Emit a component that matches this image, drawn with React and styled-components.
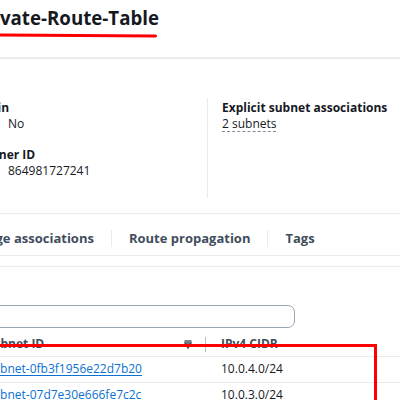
import React from 'react';
import styled, { createGlobalStyle } from 'styled-components';

const GlobalStyle = createGlobalStyle`
	html, body {
		margin: 0;
		padding: 0;
		background: #ffffff;
	}
	body {
		font-family: 'Open Sans', 'Noto Sans', sans-serif;
		color: #16191f;
	}
`;

const Viewport = styled.div`
	position: relative;
	width: 400px;
	height: 400px;
	overflow: hidden;
	background: #ffffff;
`;

const Page = styled.div`
	margin-left: -40px;
	width: 480px;
	padding-top: 6px;
`;

const Title = styled.h1`
	margin: 0 0 27px;
	padding-left: 14px;
	font-size: 18.7px;
	line-height: 24px;
	font-weight: 700;
	color: #16191f;
	white-space: nowrap;
`;

const Rule = styled.div`
	height: 2px;
	background: #e9ebed;
`;

const Details = styled.div`
	display: grid;
	grid-template-columns: 247px 1fr;
	padding-top: 39px;
	margin-bottom: 15px;
`;

const Column = styled.div`
	min-height: 100px;
	box-sizing: border-box;
	padding: 2px 0 0 ${(p) => p.$pad}px;
	border-left: ${(p) => (p.$divided ? '1px solid #e9ebed' : 'none')};
`;

const Field = styled.div`
	& + & {
		margin-top: 15px;
	}
`;

const Label = styled.div`
	font-size: 12px;
	line-height: 16px;
	font-weight: 700;
	color: #16191f;
	white-space: nowrap;
`;

const Value = styled.div`
	font-size: 12px;
	line-height: 16px;
	color: #16191f;
	padding-left: ${(p) => p.$indent || 0}px;
	white-space: nowrap;
`;

const Dotted = styled.span`
	text-decoration: underline dashed #7d8998;
	text-underline-offset: 3px;
	text-decoration-thickness: 1px;
`;

const Tabs = styled.div`
	display: flex;
	align-items: flex-start;
	border-top: 1px solid #e9ebed;
	border-bottom: 1px solid #e9ebed;
	padding: 15px 0 8px 20px;
	margin-bottom: 10px;
`;

const Tab = styled.div`
	font-size: 13px;
	line-height: 18px;
	font-weight: 700;
	color: #414d5c;
	white-space: nowrap;
	padding: 0 17px;
	&:first-child {
		padding-left: 0;
	}
`;

const TabDivider = styled.span`
	display: block;
	width: 1px;
	height: 17px;
	margin-top: 1px;
	background: #e9ebed;
`;

const TablePanel = styled.div`
	border-top: 1px solid #e9ebed;
	padding-top: 38px;
`;

const Search = styled.div`
	height: 21px;
	width: 333px;
	border: 1px solid #9ba7b6;
	border-radius: 7px;
	margin-bottom: 4px;
`;

const Row = styled.div`
	display: grid;
	grid-template-columns: 246px 1fr;
	border-bottom: 1px solid #e9ebed;
	padding: ${(p) => (p.$head ? '4px 0 4px' : '4px 0 5px')};
	font-size: 12px;
	line-height: 16px;
`;

const Cell = styled.div`
	display: flex;
	align-items: center;
	white-space: nowrap;
	padding-left: ${(p) => p.$pad}px;
	color: ${(p) => (p.$head ? '#414d5c' : '#16191f')};
	font-weight: ${(p) => (p.$head ? 700 : 400)};
`;

const HeadTools = styled.div`
	margin-left: auto;
	display: flex;
	align-items: center;
	gap: 13px;
`;

const Resizer = styled.span`
	display: block;
	width: 1px;
	height: 15px;
	background: #b6bec9;
`;

const Link = styled.a`
	color: #0972d3;
	text-decoration: underline;
	text-underline-offset: 2px;
	text-decoration-thickness: 1px;
`;

const Marker = styled.div`
	position: absolute;
	pointer-events: none;
`;

const TitleMark = styled(Marker)`
	left: -10px;
	top: 34px;
	width: 167px;
	height: 3px;
	background: #ff0000;
	border-radius: 2px;
	transform: rotate(0.3deg);
`;

const BoxMark = styled(Marker)`
	left: -10px;
	top: 344px;
	width: 387px;
	height: 200px;
	box-sizing: border-box;
	border: 3px solid #ff0000;
`;

function SortIcon() {
	return (
		<svg width="8" height="9" viewBox="0 0 8 9" fill="none" stroke="#414d5c" strokeWidth="1.4">
			<path d="M0.5 1h7" />
			<path d="M1 3l3 5 3-5z" />
		</svg>
	);
}

const tabs = ['Edge associations', 'Route propagation', 'Tags'];

const subnets = [
	{ id: 'subnet-0fb3f1956e22d7b20', cidr: '10.0.4.0/24' },
	{ id: 'subnet-07d7e30e666fe7c2c', cidr: '10.0.3.0/24' },
];

export default function App() {
	return (
		<>
			<GlobalStyle />
			<Viewport>
				<Page>
					<Title>Private-Route-Table</Title>
					<Rule />
					<Details>
						<Column $pad={19}>
							<Field>
								<Label>Main</Label>
								<Value $indent={29}>No</Value>
							</Field>
							<Field>
								<Label>Owner ID</Label>
								<Value $indent={29}>864981727241</Value>
							</Field>
						</Column>
						<Column $pad={14} $divided>
							<Field>
								<Label>Explicit subnet associations</Label>
								<Value>
									<Dotted>2 subnets</Dotted>
								</Value>
							</Field>
						</Column>
					</Details>
					<Tabs>
						{tabs.map((t, i) => (
							<React.Fragment key={t}>
								{i > 0 && <TabDivider />}
								<Tab>{t}</Tab>
							</React.Fragment>
						))}
					</Tabs>
					<TablePanel>
						<Search />
						<Row $head>
							<Cell $head $pad={26}>
								Subnet ID
								<HeadTools>
									<SortIcon />
									<Resizer />
								</HeadTools>
							</Cell>
							<Cell $head $pad={15}>
								IPv4 CIDR
							</Cell>
						</Row>
						{subnets.map((s) => (
							<Row key={s.id}>
								<Cell $pad={27}>
									<Link>{s.id}</Link>
								</Cell>
								<Cell $pad={15}>{s.cidr}</Cell>
							</Row>
						))}
					</TablePanel>
				</Page>
				<TitleMark />
				<BoxMark />
			</Viewport>
		</>
	);
}
